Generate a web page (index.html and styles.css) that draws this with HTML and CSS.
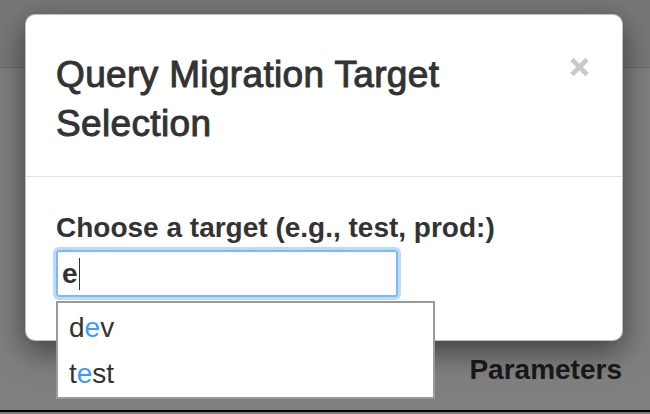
FILE: index.html
```html
<!DOCTYPE html>
<html lang="en">
<head>
<meta charset="utf-8">
<title>Query Migration Target Selection</title>
<link rel="stylesheet" href="styles.css">
</head>
<body>
<div class="page">
  <header class="navbar"></header>
  <main class="main">
    <h3 class="section-title">Parameters</h3>
    <div class="table-rule"></div>
  </main>
</div>
<div class="backdrop"></div>
<div class="modal">
  <div class="modal-header">
    <h4 class="modal-title">Query Migration Target Selection</h4>
    <button class="close" type="button" aria-label="Close">
      <svg width="21" height="20" viewBox="0 0 21 20"><path d="M3 2.5 L18 17.5 M18 2.5 L3 17.5" stroke="#c9c9c9" stroke-width="4.6" stroke-linecap="butt" fill="none"/></svg>
    </button>
  </div>
  <div class="modal-body">
    <label class="field-label">Choose a target (e.g., test, prod:)</label>
    <div class="text-input">e<span class="caret"></span></div>
  </div>
</div>
<ul class="autocomplete">
  <li class="ac-item">d<span class="hl">e</span>v</li>
  <li class="ac-item">t<span class="hl">e</span>st</li>
</ul>
</body>
</html>
```
FILE: styles.css
```css
html, body {
  margin: 0;
  padding: 0;
}
body {
  width: 650px;
  height: 414px;
  overflow: hidden;
  position: relative;
  background: #ffffff;
  font-family: "Liberation Sans", Arial, Helvetica, sans-serif;
  color: #333333;
}
.page {
  display: flex;
  flex-direction: column;
}
.navbar {
  height: 67px;
  background: #efefef;
  border-bottom: 1px solid #d2d2d2;
}
.main {
  display: flex;
  flex-direction: column;
  align-items: flex-end;
  padding-right: 28px;
}
.section-title {
  margin: 282px 0 20px;
  font-size: 28px;
  line-height: 40px;
  font-weight: 700;
  color: #333333;
}
.table-rule {
  align-self: stretch;
  margin-right: -28px;
  height: 2px;
  background: #000000;
}
.backdrop {
  position: absolute;
  inset: 0;
  background: rgba(0, 0, 0, 0.5);
}
.modal {
  position: absolute;
  left: 25px;
  top: 14px;
  width: 596px;
  height: 325px;
  background: #ffffff;
  border: 1px solid rgba(0, 0, 0, 0.25);
  border-radius: 10px;
  box-shadow: 0 10px 30px rgba(0, 0, 0, 0.5);
  display: flex;
  flex-direction: column;
}
.modal-header {
  display: flex;
  justify-content: space-between;
  align-items: flex-start;
  padding: 35px 32px 28px 30px;
  border-bottom: 1px solid #e5e5e5;
}
.modal-title {
  margin: 0;
  font-size: 37px;
  line-height: 49px;
  font-weight: 400;
  letter-spacing: 0.35px;
  -webkit-text-stroke: 1px #333333;
  color: #333333;
  width: 450px;
}
.close {
  margin-top: 7px;
  padding: 0;
  border: 0;
  background: transparent;
  display: flex;
}
.modal-body {
  padding: 31px 30px 0 30px;
  display: flex;
  flex-direction: column;
  align-items: flex-start;
}
.field-label {
  display: block;
  font-size: 28px;
  line-height: 40px;
  font-weight: 700;
  color: #333333;
  margin-bottom: 2px;
}
.text-input {
  box-sizing: border-box;
  width: 342px;
  height: 47px;
  border: 2px solid #7fb9f2;
  border-radius: 3px;
  box-shadow: 0 0 0 3px rgba(140, 195, 250, 0.6);
  padding-left: 4px;
  font-size: 28px;
  line-height: 43px;
  font-weight: 700;
  color: #333333;
  display: flex;
  align-items: center;
}
.caret {
  display: inline-block;
  width: 1.5px;
  height: 32px;
  background: #333333;
  margin-left: 1px;
}
.autocomplete {
  position: absolute;
  left: 56px;
  top: 301px;
  width: 375px;
  margin: 0;
  padding: 2px 0 0;
  list-style: none;
  background: #ffffff;
  border: 2px solid #9a9a9a;
}
.ac-item {
  padding-left: 11px;
  font-size: 28px;
  line-height: 46px;
  color: #333333;
}
.hl {
  color: #3a9cff;
}
```
